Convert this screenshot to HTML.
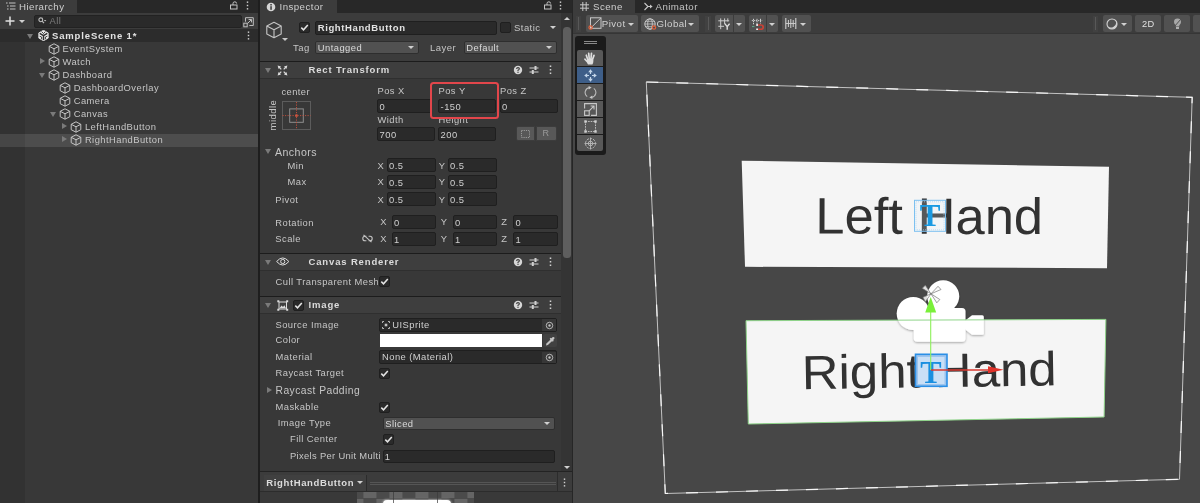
<!DOCTYPE html>
<html><head><meta charset="utf-8">
<style>
*{box-sizing:border-box;margin:0;padding:0}
html,body{width:1200px;height:503px;overflow:hidden;background:#383838}
body{font-family:"Liberation Sans",sans-serif;font-size:9.4px;letter-spacing:.45px;color:#c6c6c6;position:relative;-webkit-font-smoothing:antialiased}
.a{position:absolute}
.t{position:absolute;white-space:nowrap;line-height:12.8px;height:12.8px}
.b{font-weight:bold;font-size:9.5px;letter-spacing:.85px;color:#dcdcdc}
.f{position:absolute;background:#2a2a2a;border:1px solid #1f1f1f;border-radius:2px;height:14px}
.f span{color:#d0d0d0;position:absolute;left:1.6px;top:1px;line-height:12px;white-space:nowrap}
.dd{position:absolute;background:#515151;border:1px solid #2e2e2e;border-radius:2px;height:12.5px}
.dd span{position:absolute;left:1.8px;top:-0.5px;line-height:12px;white-space:nowrap;color:#dadada}
.dd i{position:absolute;right:4px;top:4px;width:0;height:0;border-left:3px solid transparent;border-right:3px solid transparent;border-top:3.5px solid #d0d0d0}
.cb{position:absolute;width:11px;height:11px;background:#2a2a2a;border:1px solid #1f1f1f;border-radius:2px}
.cb svg{position:absolute;left:0;top:0}
.tri-d{position:absolute;width:0;height:0;border-left:3.5px solid transparent;border-right:3.5px solid transparent;border-top:5px solid #7a7a7a}
.tri-r{position:absolute;width:0;height:0;border-top:3.5px solid transparent;border-bottom:3.5px solid transparent;border-left:5px solid #7a7a7a}
.hdr{position:absolute;left:260px;width:301px;background:#3e3e3e;border-top:1px solid #1c1c1c;border-bottom:1px solid #2f2f2f}
.btn{position:absolute;top:15.3px;height:16.4px;background:#515151;border-radius:2px}
</style></head><body><div id="root" style="position:absolute;left:0;top:0;width:1200px;height:503px;filter:blur(0.35px)">

<!-- ================= HIERARCHY ================= -->
<div id="hier" class="a" style="left:0;top:0;width:258px;height:503px;background:#383838"></div>
<div class="a" style="left:258px;top:0;width:2px;height:503px;background:#1e1e1e"></div>
<svg width="0" height="0" style="position:absolute"><defs><symbol id="cube" viewBox="0 0 12 12"><path d="M6 0.8 L10.8 3.3 V8.7 L6 11.2 L1.2 8.7 V3.3 Z M1.2 3.3 L6 5.8 L10.8 3.3 M6 5.8 V11.2" fill="none" stroke="#c4c4c4" stroke-width="1" stroke-linejoin="round"/></symbol><symbol id="chk" viewBox="0 0 11 11"><path d="M2.3 5.6 L4.5 7.8 L8.8 2.9" fill="none" stroke="#e4e4e4" stroke-width="1.5"/></symbol><symbol id="help" viewBox="0 0 10 10"><circle cx="5" cy="5" r="4.2" fill="#d6d6d6"/><path d="M3.6 4 Q3.6 2.6 5 2.6 Q6.4 2.6 6.4 3.8 Q6.4 4.6 5 5.3 V6" fill="none" stroke="#3e3e3e" stroke-width="1.1"/><rect x="4.4" y="6.7" width="1.2" height="1.2" fill="#3e3e3e"/></symbol><symbol id="preset" viewBox="0 0 10 10"><path d="M0.5 3 H9.5 M0.5 7 H9.5" stroke="#d0d0d0" stroke-width="1"/><rect x="5.5" y="1" width="2" height="4" fill="#d0d0d0"/><rect x="2.8" y="5" width="2" height="4" fill="#d0d0d0"/></symbol><symbol id="kebab" viewBox="0 0 3 10"><rect x="0.7" y="0.5" width="1.6" height="1.6" fill="#d0d0d0"/><rect x="0.7" y="4.2" width="1.6" height="1.6" fill="#d0d0d0"/><rect x="0.7" y="7.9" width="1.6" height="1.6" fill="#d0d0d0"/></symbol><symbol id="picker" viewBox="0 0 10 10"><circle cx="5" cy="5" r="3.6" fill="none" stroke="#c4c4c4" stroke-width="1"/><circle cx="5" cy="5" r="1.3" fill="#c4c4c4"/></symbol></defs></svg>
<div class="a" style="left:0;top:0;width:258px;height:13px;background:#282828"></div>
<div class="a" style="left:0;top:0;width:77px;height:13px;background:#3c3c3c"></div>
<svg class="a" style="left:6px;top:2px" width="10" height="8" viewBox="0 0 10 8"><path d="M0 1 H1.6 M3 1 H9.5 M1 4 H2.6 M4 4 H9.5 M1 7 H2.6 M4 7 H9.5" stroke="#c4c4c4" stroke-width="1"/></svg>
<div class="t" style="left:19px;top:0.5px;color:#cfcfcf;font-size:9.7px">Hierarchy</div>
<svg class="a" style="left:230px;top:1px" width="8" height="9" viewBox="0 0 8 9"><rect x="0.5" y="4" width="6.5" height="4" fill="none" stroke="#c4c4c4" stroke-width="1"/><path d="M3 4 V2.5 Q3 0.8 4.8 0.8 Q6.6 0.8 6.6 2.5" fill="none" stroke="#c4c4c4" stroke-width="1"/></svg>
<svg class="a" style="left:246px;top:1px" width="3" height="9"><use href="#kebab"/></svg>
<div class="a" style="left:0;top:13px;width:258px;height:16px;background:#3c3c3c"></div>
<svg class="a" style="left:5px;top:16px" width="10" height="10" viewBox="0 0 10 10"><path d="M5 0.5 V9.5 M0.5 5 H9.5" stroke="#e0e0e0" stroke-width="1.5"/></svg>
<div class="a" style="left:18.5px;top:19.5px;width:0;height:0;border-left:3px solid transparent;border-right:3px solid transparent;border-top:3.5px solid #d0d0d0"></div>
<div class="a" style="left:34px;top:14.5px;width:208px;height:13.5px;background:#2a2a2a;border:1px solid #222;border-radius:2px"></div>
<svg class="a" style="left:38px;top:17px" width="9" height="8" viewBox="0 0 9 8"><circle cx="2.8" cy="2.8" r="1.9" fill="none" stroke="#bdbdbd" stroke-width="1.1"/><path d="M4.2 4.2 L6 6.2" stroke="#bdbdbd" stroke-width="1.2"/><path d="M5.8 3 H8.4 L7.1 4.6 Z" fill="#bdbdbd"/></svg>
<div class="t" style="left:49.5px;top:15.3px;color:#7c7c7c">All</div>
<svg class="a" style="left:243px;top:16.5px" width="11" height="11" viewBox="0 0 11 11"><path d="M2.5 0.7 H10.3 V8.5 H6.3 M2.5 0.7 V4.7" fill="none" stroke="#bdbdbd" stroke-width="1"/><rect x="0.8" y="6.2" width="3.4" height="3.6" fill="none" stroke="#bdbdbd" stroke-width="1"/><path d="M4.5 6.5 L8.3 2.7 M5.6 2.5 H8.5 V5.4" fill="none" stroke="#bdbdbd" stroke-width="1"/></svg>
<div class="a" style="left:0;top:29px;width:258px;height:13px;background:#2c2c2c"></div>

<div class="tri-d" style="left:27px;top:33.5px"></div>
<svg class="a" style="left:37.8px;top:30px" width="11" height="11" viewBox="0 0 11 11"><path d="M5.5 0.2 L10.2 2.9 V8.1 L5.5 10.8 L0.8 8.1 V2.9 Z" fill="#ececec" stroke="#ececec" stroke-width="0.8" stroke-linejoin="round"/><path d="M5.5 5.6 V10 M5.5 5.6 L1.7 3.4 M5.5 5.6 L9.3 3.4" stroke="#2d2d2d" stroke-width="1.5"/><path d="M3.6 1.6 L5.5 3.6 L7.4 1.6 M1.6 6.2 L3.6 7 V9.2 M9.4 6.2 L7.4 7 V9.2" fill="none" stroke="#2d2d2d" stroke-width="0.9"/></svg>
<div class="t b" style="left:52px;top:29.5px;color:#e2e2e2">SampleScene 1*</div>
<svg class="a" style="left:247px;top:31px" width="3" height="9"><use href="#kebab"/></svg>
<svg class="a" style="left:47.6px;top:43.2px" width="12" height="12"><use href="#cube"/></svg>
<div class="t" style="left:62.5px;top:42.5px;font-size:9.4px">EventSystem</div>
<div class="tri-r" style="left:40.0px;top:58.2px"></div>
<svg class="a" style="left:47.6px;top:56.2px" width="12" height="12"><use href="#cube"/></svg>
<div class="t" style="left:62.5px;top:55.5px;font-size:9.4px">Watch</div>
<div class="tri-d" style="left:38.5px;top:72.5px"></div>
<svg class="a" style="left:47.6px;top:69.2px" width="12" height="12"><use href="#cube"/></svg>
<div class="t" style="left:62.5px;top:68.5px;font-size:9.4px">Dashboard</div>
<svg class="a" style="left:58.8px;top:82.2px" width="12" height="12"><use href="#cube"/></svg>
<div class="t" style="left:73.7px;top:81.5px;font-size:9.4px">DashboardOverlay</div>
<svg class="a" style="left:58.8px;top:95.2px" width="12" height="12"><use href="#cube"/></svg>
<div class="t" style="left:73.7px;top:94.5px;font-size:9.4px">Camera</div>
<div class="tri-d" style="left:49.7px;top:111.5px"></div>
<svg class="a" style="left:58.8px;top:108.2px" width="12" height="12"><use href="#cube"/></svg>
<div class="t" style="left:73.7px;top:107.5px;font-size:9.4px">Canvas</div>
<div class="tri-r" style="left:62.4px;top:123.2px"></div>
<svg class="a" style="left:70.0px;top:121.2px" width="12" height="12"><use href="#cube"/></svg>
<div class="t" style="left:84.9px;top:120.5px;font-size:9.4px">LeftHandButton</div>
<div class="a" style="left:0;top:133.5px;width:258px;height:13.2px;background:#4d4d4d"></div>
<div class="a" style="left:0;top:42px;width:25px;height:461px;background:rgba(0,0,0,0.09)"></div>
<div class="tri-r" style="left:62.4px;top:136.2px"></div>
<svg class="a" style="left:70.0px;top:134.2px" width="12" height="12"><use href="#cube"/></svg>
<div class="t" style="left:84.9px;top:133.5px;font-size:9.4px">RightHandButton</div>
<div id="insp" class="a" style="left:260px;top:0;width:312px;height:503px;background:#383838"></div>
<div class="a" style="left:260px;top:0;width:312px;height:13px;background:#282828"></div>
<div class="a" style="left:260px;top:0;width:77px;height:13px;background:#3c3c3c"></div>
<svg class="a" style="left:266px;top:1.5px" width="10" height="10" viewBox="0 0 10 10"><circle cx="5" cy="5" r="4.3" fill="#d6d6d6"/><rect x="4.3" y="4.2" width="1.5" height="3.6" fill="#3c3c3c"/><rect x="4.3" y="2" width="1.5" height="1.5" fill="#3c3c3c"/></svg>
<div class="t" style="left:279.5px;top:0.5px;color:#cfcfcf;font-size:9.7px">Inspector</div>
<svg class="a" style="left:544px;top:1px" width="8" height="9" viewBox="0 0 8 9"><rect x="0.5" y="4" width="6.5" height="4" fill="none" stroke="#c4c4c4" stroke-width="1"/><path d="M3 4 V2.5 Q3 0.8 4.8 0.8 Q6.6 0.8 6.6 2.5" fill="none" stroke="#c4c4c4" stroke-width="1"/></svg>
<svg class="a" style="left:559px;top:1px" width="3" height="9"><use href="#kebab"/></svg>
<div class="a" style="left:260px;top:13px;width:301px;height:48px;background:#3c3c3c"></div>
<svg class="a" style="left:265px;top:21px" width="18" height="18" viewBox="0 0 12 12"><path d="M6 0.8 L10.8 3.3 V8.7 L6 11.2 L1.2 8.7 V3.3 Z M1.2 3.3 L6 5.8 L10.8 3.3 M6 5.8 V11.2" fill="none" stroke="#c4c4c4" stroke-width="0.75" stroke-linejoin="round"/></svg>
<div class="a" style="left:282px;top:38px;width:0;height:0;border-left:3px solid transparent;border-right:3px solid transparent;border-top:3.5px solid #c8c8c8"></div>
<div class="cb" style="left:298.8px;top:22px"><svg width="11" height="11" style="left:-1px;top:-1px"><use href="#chk"/></svg></div>
<div class="f" style="left:315px;top:20.5px;width:181.5px;height:14.5px"><span class="b" style="left:1.7px;top:0.8px;color:#e2e2e2;letter-spacing:.62px">RightHandButton</span></div>
<div class="cb" style="left:499.7px;top:22px"></div>
<div class="t" style="left:514px;top:22.2px;font-size:9.5px">Static</div>
<div class="a" style="left:549.5px;top:26px;width:0;height:0;border-left:3px solid transparent;border-right:3px solid transparent;border-top:3.5px solid #d0d0d0"></div>
<div class="t" style="left:293px;top:42.2px;font-size:9.5px">Tag</div>
<div class="dd" style="left:315px;top:41px;width:103.5px"><span>Untagged</span><i></i></div>
<div class="t" style="left:430px;top:42.2px;font-size:9.5px">Layer</div>
<div class="dd" style="left:463.5px;top:41px;width:93.5px"><span>Default</span><i></i></div>
<div class="hdr" style="top:61px;height:17.7px"></div>
<div class="tri-d" style="left:265px;top:67.5px"></div>
<div class="t b" style="left:308.5px;top:64px">Rect Transform</div>
<svg class="a" style="left:513px;top:65px" width="10" height="10"><use href="#help"/></svg>
<svg class="a" style="left:529px;top:65px" width="10" height="10"><use href="#preset"/></svg>
<svg class="a" style="left:548.8px;top:65.3px" width="3" height="9.5"><use href="#kebab"/></svg>
<svg class="a" style="left:277px;top:64.5px" width="11" height="11" viewBox="0 0 11 11"><path d="M0.6 0.6 L4 1.6 L1.6 4 Z M10.4 0.6 L7 1.6 L9.4 4 Z M0.6 10.4 L4 9.4 L1.6 7 Z M10.4 10.4 L7 9.4 L9.4 7 Z" fill="#dcdcdc"/><path d="M2 2 L4.3 4.3 M9 2 L6.7 4.3 M2 9 L4.3 6.7 M9 9 L6.7 6.7" stroke="#dcdcdc" stroke-width="1.2"/></svg>
<div class="t" style="left:281.5px;top:86px;font-size:9.3px">center</div>
<div class="t" style="left:257.7px;top:109px;width:30px;text-align:center;font-size:9.5px;transform:rotate(-90deg)">middle</div>
<svg class="a" style="left:281.5px;top:100.8px" width="29" height="29" viewBox="0 0 29 29"><rect x="0.5" y="0.5" width="28" height="28" fill="none" stroke="#5c5c5c" stroke-width="1"/><rect x="7.7" y="7.9" width="13.6" height="13.4" fill="none" stroke="#8e8e8e" stroke-width="1"/><path d="M0.5 14.6 H28.5 M14.5 1 V28" stroke="#c8503c" stroke-width="0.9" stroke-dasharray="1.2 1.3"/><rect x="13.3" y="13.4" width="2.4" height="2.4" fill="#d0553f"/></svg>
<div class="t" style="left:377.5px;top:84.5px">Pos X</div>
<div class="f" style="left:377px;top:98.5px;width:58px"><span>0</span></div>
<div class="t" style="left:438.5px;top:84.5px">Pos Y</div>
<div class="f" style="left:438px;top:98.5px;width:58px"><span>-150</span></div>
<div class="t" style="left:500.0px;top:84.5px">Pos Z</div>
<div class="f" style="left:499.5px;top:98.5px;width:58px"><span>0</span></div>
<div class="t" style="left:377.5px;top:113.5px">Width</div>
<div class="f" style="left:377px;top:127.3px;width:58px"><span>700</span></div>
<div class="t" style="left:438.5px;top:113.5px">Height</div>
<div class="f" style="left:438px;top:127.3px;width:58px"><span>200</span></div>
<div class="a" style="left:430.3px;top:82px;width:68.3px;height:37.3px;border:2px solid #e2464b;border-radius:3.5px;background:#383838"></div>
<div class="t" style="left:438.5px;top:84.5px">Pos Y</div>
<div class="f" style="left:438px;top:98.5px;width:58px"><span>-150</span></div>
<div class="a" style="left:515.5px;top:126.3px;width:19.5px;height:14.4px;background:#585858;border:1px solid #3c3c3c;border-radius:2px 0 0 2px"></div>
<svg class="a" style="left:521px;top:129.5px" width="9" height="8" viewBox="0 0 9 8"><rect x="0.5" y="0.5" width="8" height="7" fill="none" stroke="#9a9a9a" stroke-width="1" stroke-dasharray="1.2 1"/></svg>
<div class="a" style="left:535.5px;top:126.3px;width:21.5px;height:14.4px;background:#585858;border:1px solid #3c3c3c;border-radius:0 2px 2px 0"></div>
<div class="t" style="left:542.5px;top:127.3px;color:#9a9a9a;font-size:9px">R</div>
<div class="tri-d" style="left:265px;top:148.5px"></div>
<div class="t" style="left:275px;top:146.0px;font-size:10.6px">Anchors</div>
<div class="t" style="left:287.5px;top:160px">Min</div>
<div class="t" style="left:377.5px;top:159.5px">X</div>
<div class="f" style="left:386.5px;top:158.3px;width:49px"><span>0.5</span></div>
<div class="t" style="left:438.7px;top:159.5px">Y</div>
<div class="f" style="left:447.5px;top:158.3px;width:49px"><span>0.5</span></div>
<div class="t" style="left:287.5px;top:176.3px">Max</div>
<div class="t" style="left:377.5px;top:175.8px">X</div>
<div class="f" style="left:386.5px;top:174.60000000000002px;width:49px"><span>0.5</span></div>
<div class="t" style="left:438.7px;top:175.8px">Y</div>
<div class="f" style="left:447.5px;top:174.60000000000002px;width:49px"><span>0.5</span></div>
<div class="t" style="left:275.3px;top:194px">Pivot</div>
<div class="t" style="left:377.5px;top:193.5px">X</div>
<div class="f" style="left:386.5px;top:192.3px;width:49px"><span>0.5</span></div>
<div class="t" style="left:438.7px;top:193.5px">Y</div>
<div class="f" style="left:447.5px;top:192.3px;width:49px"><span>0.5</span></div>
<div class="t" style="left:275.3px;top:216.8px">Rotation</div>
<div class="t" style="left:380.3px;top:216.3px">X</div>
<div class="f" style="left:391.5px;top:215.10000000000002px;width:44.5px"><span>0</span></div>
<div class="t" style="left:440.8px;top:216.3px">Y</div>
<div class="f" style="left:452.5px;top:215.10000000000002px;width:44.5px"><span>0</span></div>
<div class="t" style="left:501.3px;top:216.3px">Z</div>
<div class="f" style="left:513px;top:215.10000000000002px;width:44.5px"><span>0</span></div>
<div class="t" style="left:275.3px;top:233.2px">Scale</div>
<div class="t" style="left:380.3px;top:232.7px">X</div>
<div class="f" style="left:391.5px;top:231.5px;width:44.5px"><span>1</span></div>
<div class="t" style="left:440.8px;top:232.7px">Y</div>
<div class="f" style="left:452.5px;top:231.5px;width:44.5px"><span>1</span></div>
<div class="t" style="left:501.3px;top:232.7px">Z</div>
<div class="f" style="left:513px;top:231.5px;width:44.5px"><span>1</span></div>
<svg class="a" style="left:361.5px;top:234px" width="11" height="9" viewBox="0 0 11 9"><path d="M4.4 2.2 H3 Q0.8 2.2 0.8 4.5 Q0.8 6.8 3 6.8 H4.4 M6.6 2.2 H8 Q10.2 2.2 10.2 4.5 Q10.2 6.8 8 6.8 H6.6" fill="none" stroke="#c4c4c4" stroke-width="1.1"/><path d="M1.5 0.8 L9.5 8.2" stroke="#c4c4c4" stroke-width="1.1"/></svg>
<div class="hdr" style="top:253px;height:17.7px"></div>
<div class="tri-d" style="left:265px;top:259.5px"></div>
<div class="t b" style="left:308.5px;top:256px">Canvas Renderer</div>
<svg class="a" style="left:513px;top:257px" width="10" height="10"><use href="#help"/></svg>
<svg class="a" style="left:529px;top:257px" width="10" height="10"><use href="#preset"/></svg>
<svg class="a" style="left:548.8px;top:257.3px" width="3" height="9.5"><use href="#kebab"/></svg>
<svg class="a" style="left:276px;top:257px" width="13.5" height="9" viewBox="0 0 13.5 9"><path d="M0.6 4.5 Q6.75 -2.6 12.9 4.5 Q6.75 11.6 0.6 4.5 Z" fill="none" stroke="#dcdcdc" stroke-width="1"/><circle cx="6.75" cy="4.5" r="2.1" fill="none" stroke="#dcdcdc" stroke-width="1"/></svg>
<div class="t" style="left:275.5px;top:275.5px;width:102px;overflow:hidden">Cull Transparent Mesh</div>
<div class="cb" style="left:379px;top:275.8px"><svg width="11" height="11" style="left:-1px;top:-1px"><use href="#chk"/></svg></div>
<div class="hdr" style="top:296px;height:17.7px"></div>
<div class="tri-d" style="left:265px;top:302.5px"></div>
<div class="t b" style="left:308.5px;top:299px">Image</div>
<svg class="a" style="left:513px;top:300px" width="10" height="10"><use href="#help"/></svg>
<svg class="a" style="left:529px;top:300px" width="10" height="10"><use href="#preset"/></svg>
<svg class="a" style="left:548.8px;top:300.3px" width="3" height="9.5"><use href="#kebab"/></svg>
<svg class="a" style="left:277px;top:299.5px" width="11.5" height="11" viewBox="0 0 11.5 11"><rect x="2" y="2" width="7.5" height="7" fill="none" stroke="#dcdcdc" stroke-width="1"/><path d="M0.3 0.3 H2.3 V2.3 H0.3 Z M9.2 0.3 H11.2 V2.3 H9.2 Z M0.3 8.7 H2.3 V10.7 H0.3 Z M9.2 8.7 H11.2 V10.7 H9.2 Z" fill="#dcdcdc"/><path d="M2.5 8.2 L4.6 5.6 L6 7 L7.4 5.2 L9 8.2 Z" fill="#dcdcdc"/></svg>
<div class="cb" style="left:292.5px;top:299.7px"><svg width="11" height="11" style="left:-1px;top:-1px"><use href="#chk"/></svg></div>
<div class="t" style="left:275.5px;top:318.5px;font-size:9.4px">Source Image</div>
<div class="f" style="left:379px;top:317.7px;width:178px;height:14.3px"><span style="left:12.3px;top:0.6px">UISprite</span></div>
<svg class="a" style="left:381.5px;top:321px" width="8" height="8" viewBox="0 0 8 8"><path d="M0.5 2 V0.5 H2 M6 0.5 H7.5 V2 M7.5 6 V7.5 H6 M2 7.5 H0.5 V6" fill="none" stroke="#c4c4c4" stroke-width="0.9"/><rect x="2.7" y="2.7" width="2.6" height="2.6" fill="#c4c4c4"/></svg>
<div class="a" style="left:541.5px;top:319.3px;width:14.5px;height:11.5px;background:#373737"></div>
<svg class="a" style="left:544.5px;top:320.5px" width="9" height="9"><use href="#picker"/></svg>
<div class="t" style="left:275.5px;top:334.0px;font-size:9.4px">Color</div>
<div class="a" style="left:379.8px;top:334.2px;width:162.5px;height:13px;background:#fff"></div>
<div class="a" style="left:543.3px;top:334.2px;width:14px;height:13px;background:#414141;border-radius:2px"></div>
<svg class="a" style="left:545px;top:335.5px" width="10.5" height="10.5" viewBox="0 0 10.5 10.5"><path d="M1 9.5 L1.4 7.6 L5.6 3.4 L7.1 4.9 L2.9 9.1 Z" fill="#c4c4c4"/><path d="M5.2 2.2 L8.3 5.3" stroke="#c4c4c4" stroke-width="1.5"/><path d="M6.6 3.9 L8.3 2.2" stroke="#c4c4c4" stroke-width="2.4" stroke-linecap="round"/></svg>
<div class="t" style="left:275.5px;top:350.5px;font-size:9.4px">Material</div>
<div class="f" style="left:379px;top:350.3px;width:178px;height:13.6px"><span style="left:2px;top:-0.2px">None (Material)</span></div>
<div class="a" style="left:541.5px;top:351.7px;width:14.5px;height:11px;background:#373737"></div>
<svg class="a" style="left:544.5px;top:352.7px" width="9" height="9"><use href="#picker"/></svg>
<div class="t" style="left:275.5px;top:366.8px;font-size:9.4px">Raycast Target</div>
<div class="cb" style="left:379px;top:367.6px"><svg width="11" height="11" style="left:-1px;top:-1px"><use href="#chk"/></svg></div>
<div class="tri-r" style="left:266.5px;top:386.5px"></div>
<div class="t" style="left:275.5px;top:384.7px;font-size:10.3px">Raycast Padding</div>
<div class="t" style="left:275.5px;top:401.0px;font-size:9.4px">Maskable</div>
<div class="cb" style="left:379px;top:401.7px"><svg width="11" height="11" style="left:-1px;top:-1px"><use href="#chk"/></svg></div>
<div class="t" style="left:277.8px;top:416.8px;font-size:9.4px">Image Type</div>
<div class="dd" style="left:382.5px;top:417px;width:172px;height:13px"><span style="top:-0.3px">Sliced</span><i></i></div>
<div class="t" style="left:290px;top:432.5px;font-size:9.4px">Fill Center</div>
<div class="cb" style="left:382.5px;top:434px"><svg width="11" height="11" style="left:-1px;top:-1px"><use href="#chk"/></svg></div>
<div class="t" style="left:290px;top:449.5px;width:90.5px;overflow:hidden;letter-spacing:.33px">Pixels Per Unit Multiplier</div>
<div class="f" style="left:382.5px;top:449.7px;width:172.5px;height:13.3px"><span style="left:1.2px;top:0.6px">1</span></div>
<div class="a" style="left:561px;top:13px;width:11px;height:458px;background:#343434"></div>
<div class="a" style="left:563.5px;top:17px;width:0;height:0;border-left:3px solid transparent;border-right:3px solid transparent;border-bottom:3.5px solid #d0d0d0"></div>
<div class="a" style="left:563px;top:26.5px;width:7.5px;height:231.5px;background:#5e5e5e;border-radius:3.5px"></div>
<div class="a" style="left:563.5px;top:465.5px;width:0;height:0;border-left:3px solid transparent;border-right:3px solid transparent;border-top:3.5px solid #d0d0d0"></div>
<div class="a" style="left:260px;top:470.5px;width:312px;height:21px;background:#3c3c3c;border-top:1px solid #232323;border-bottom:1px solid #2c2c2c"></div>
<div class="a" style="left:263.5px;top:474.5px;width:103px;height:16.5px;background:#404040;border-right:1px solid #2c2c2c"></div>
<div class="t b" style="left:266.3px;top:476.5px;letter-spacing:.62px">RightHandButton</div>
<div class="a" style="left:356.7px;top:481.3px;width:0;height:0;border-left:3px solid transparent;border-right:3px solid transparent;border-top:3.5px solid #d0d0d0"></div>
<div class="a" style="left:370px;top:481.5px;width:186px;height:1px;background:#555"></div>
<div class="a" style="left:370px;top:484px;width:186px;height:1px;background:#555"></div>
<div class="a" style="left:557.3px;top:471.5px;width:1px;height:19px;background:#2c2c2c"></div>
<svg class="a" style="left:563.3px;top:478px" width="3" height="9"><use href="#kebab"/></svg>
<div class="a" style="left:260px;top:492px;width:312px;height:11px;background:#393939"></div>
<div class="a" style="left:356.9px;top:492px;width:117.3px;height:11px;background:repeating-conic-gradient(#656565 0 25%,#4b4b4b 0 50%) -6.6px 0/26px 13px"></div>
<div class="a" style="left:383px;top:500.3px;width:68px;height:8px;background:#fff;border-radius:5px;box-shadow:0 0 2px 1px rgba(255,255,255,.35)"></div>
<div class="a" style="left:393px;top:492px;width:1px;height:11px;background:#3a3a3a;opacity:.7"></div>
<div class="a" style="left:437px;top:492px;width:1px;height:11px;background:#3a3a3a;opacity:.7"></div>
<div class="a" style="left:572px;top:0;width:1px;height:503px;background:#262626"></div>
<div id="scene" class="a" style="left:573px;top:0;width:627px;height:503px;background:#474747"></div>
<div class="a" style="left:573px;top:0;width:627px;height:13px;background:#282828"></div>
<div class="a" style="left:573px;top:0;width:62px;height:13px;background:#3c3c3c"></div>
<svg class="a" style="left:580px;top:1.5px" width="9" height="9" viewBox="0 0 9 9"><path d="M2.8 0 V9 M6.2 0 V9 M0 2.8 H9 M0 6.2 H9" stroke="#c8c8c8" stroke-width="1"/></svg>
<div class="t" style="left:593px;top:0.5px;color:#cfcfcf;font-size:9.7px">Scene</div>
<svg class="a" style="left:643.5px;top:1.5px" width="9" height="9" viewBox="0 0 9 9"><path d="M0.5 1 L4 4.5 L0.5 8 M4 4.5 H8" fill="none" stroke="#c8c8c8" stroke-width="1.1"/><path d="M6 2.6 L8.6 4.5 L6 6.4 Z" fill="#c8c8c8"/></svg>
<div class="t" style="left:655.5px;top:0.5px;color:#c4c4c4;font-size:9.7px">Animator</div>
<div class="a" style="left:573px;top:13px;width:627px;height:20.7px;background:#3c3c3c;border-bottom:1px solid #363636"></div>
<div class="a" style="left:575.8px;top:15.5px;width:5.4px;height:16px;background:#414141"></div><div class="a" style="left:578.0px;top:17px;width:1px;height:13px;background:#585858"></div>

<div class="btn" style="left:586px;width:52px"></div>
<svg class="a" style="left:588px;top:17px" width="14" height="13" viewBox="0 0 14 13"><rect x="2.5" y="0.8" width="10.5" height="10.5" fill="none" stroke="#c8c8c8" stroke-width="1"/><path d="M2.8 11 L12.8 1" stroke="#c8c8c8" stroke-width="1"/><circle cx="2.6" cy="10.6" r="1.7" fill="none" stroke="#e8623a" stroke-width="1.1"/></svg>
<div class="t" style="left:601.8px;top:17.7px;font-size:9.7px;color:#d0d0d0">Pivot</div>
<div class="a" style="left:627.5px;top:22.5px;width:0;height:0;border-left:3.2px solid transparent;border-right:3.2px solid transparent;border-top:3.7px solid #d0d0d0"></div>
<div class="btn" style="left:641.3px;width:57.4px"></div>
<svg class="a" style="left:644px;top:17.5px" width="13" height="12" viewBox="0 0 13 12"><circle cx="6" cy="6" r="5.2" fill="none" stroke="#c8c8c8" stroke-width="1"/><ellipse cx="6" cy="6" rx="2.3" ry="5.2" fill="none" stroke="#c8c8c8" stroke-width="0.9"/><path d="M0.8 6 H11.2 M1.6 3.3 H10.4 M1.6 8.7 H10.4" stroke="#c8c8c8" stroke-width="0.8"/><circle cx="10" cy="9.6" r="1.7" fill="#515151" stroke="#e8623a" stroke-width="1.1"/></svg>
<div class="t" style="left:656.5px;top:17.7px;font-size:9.7px;color:#d0d0d0">Global</div>
<div class="a" style="left:688px;top:22.5px;width:0;height:0;border-left:3.2px solid transparent;border-right:3.2px solid transparent;border-top:3.7px solid #d0d0d0"></div>
<div class="a" style="left:705.3px;top:15.5px;width:5.4px;height:16px;background:#414141"></div><div class="a" style="left:707.5px;top:17px;width:1px;height:13px;background:#585858"></div>

<div class="btn" style="left:715px;width:18px;border-radius:2px 0 0 2px"></div>
<svg class="a" style="left:718px;top:17.5px" width="12" height="12" viewBox="0 0 12 12"><path d="M2.7 0.4 V11.2 M6.6 0.4 V6 M0.3 2.8 H11.2 M0.3 8.3 H6 M9.8 0.4 V3.5" stroke="#cdcdcd" stroke-width="1"/><path d="M6.8 5.6 L9.2 8.6 L11.6 5.6 M9.2 8.6 V11.7" fill="none" stroke="#e0e0e0" stroke-width="1.4"/></svg>
<div class="btn" style="left:733.8px;width:11.5px;border-radius:0 2px 2px 0"></div>
<div class="a" style="left:736.4px;top:22.5px;width:0;height:0;border-left:3.2px solid transparent;border-right:3.2px solid transparent;border-top:3.7px solid #d0d0d0"></div>
<div class="btn" style="left:748.7px;width:17.2px;border-radius:2px 0 0 2px"></div>
<svg class="a" style="left:751px;top:17.5px" width="13" height="12" viewBox="0 0 13 12"><path d="M2.5 0.8 V7 M6 0.8 V6 M9.5 0.8 V5.5" stroke="#cdcdcd" stroke-width="1" stroke-dasharray="1.3 0.7"/><path d="M0.8 2.6 H11.2" stroke="#cdcdcd" stroke-width="1" stroke-dasharray="1.3 0.7"/><path d="M1 8.6 H3.4" stroke="#5fae8a" stroke-width="1"/><path d="M7 7 H9.6 Q12.2 7 12.2 9.2 Q12.2 11.4 9.6 11.4 H7" fill="none" stroke="#c94236" stroke-width="1.7"/><rect x="5.2" y="6.1" width="1.8" height="1.8" fill="#f0f0f0"/><rect x="5.2" y="10.5" width="1.8" height="1.8" fill="#f0f0f0"/></svg>
<div class="btn" style="left:766.8px;width:11.5px;border-radius:0 2px 2px 0"></div>
<div class="a" style="left:769.4px;top:22.5px;width:0;height:0;border-left:3.2px solid transparent;border-right:3.2px solid transparent;border-top:3.7px solid #d0d0d0"></div>
<div class="btn" style="left:782px;width:28.5px"></div>
<svg class="a" style="left:784.5px;top:18px" width="12" height="11" viewBox="0 0 12 11"><path d="M0.8 0 V11 M10.8 0 V11" stroke="#d0d0d0" stroke-width="1.1"/><path d="M3.4 2 V9 M5.8 1 V10 M8.2 2 V9" stroke="#d0d0d0" stroke-width="1"/><path d="M0.8 5.5 H10.8" stroke="#d0d0d0" stroke-width="0.9"/></svg>
<div class="a" style="left:799.5px;top:22.5px;width:0;height:0;border-left:3.2px solid transparent;border-right:3.2px solid transparent;border-top:3.7px solid #d0d0d0"></div>
<div class="a" style="left:1092.8px;top:15.5px;width:5.4px;height:16px;background:#414141"></div><div class="a" style="left:1095.0px;top:17px;width:1px;height:13px;background:#585858"></div>

<div class="btn" style="left:1102.8px;width:29.2px"></div>
<svg class="a" style="left:1105.5px;top:17.5px" width="12" height="12" viewBox="0 0 12 12"><circle cx="6" cy="6" r="5" fill="none" stroke="#d4d4d4" stroke-width="1.1"/><path d="M10.2 3.2 A5 5 0 1 1 1.6 8.3 A5.4 5.4 0 0 0 10.2 3.2 Z" fill="#d4d4d4"/></svg>
<div class="a" style="left:1120.5px;top:22.5px;width:0;height:0;border-left:3.2px solid transparent;border-right:3.2px solid transparent;border-top:3.7px solid #d0d0d0"></div>
<div class="btn" style="left:1134.8px;width:26.2px"></div>
<div class="t" style="left:1142px;top:17.7px;font-size:9.3px;color:#e0e0e0">2D</div>
<div class="btn" style="left:1164px;width:26px"></div>
<svg class="a" style="left:1172.5px;top:17.5px" width="9" height="12" viewBox="0 0 9 12"><path d="M4.5 0.6 Q8 0.6 8 4 Q8 5.8 6.3 7.2 V8.4 H2.7 V7.2 Q1 5.8 1 4 Q1 0.6 4.5 0.6 Z" fill="#a8a8a8"/><rect x="3" y="9.2" width="3" height="1.6" fill="#c8c8c8"/><path d="M1 9 L8 1" stroke="#515151" stroke-width="1"/></svg>
<div class="btn" style="left:1192.8px;width:10px"></div>
<div class="a" style="left:575.2px;top:35.5px;width:30.4px;height:119.3px;background:#1b1b1b;border-radius:3px"></div>
<div class="a" style="left:584px;top:40.8px;width:13px;height:1px;background:#8a8a8a"></div>
<div class="a" style="left:584px;top:43.3px;width:13px;height:1px;background:#8a8a8a"></div>
<div class="a" style="left:577px;top:50px;width:26px;height:16.3px;background:#585858;border-radius:2px 2px 0 0"></div>
<div class="a" style="left:577px;top:67px;width:26px;height:16.3px;background:#3e5e88;border-radius:0"></div>
<div class="a" style="left:577px;top:84px;width:26px;height:16.3px;background:#585858;border-radius:0"></div>
<div class="a" style="left:577px;top:101px;width:26px;height:16.3px;background:#585858;border-radius:0"></div>
<div class="a" style="left:577px;top:118px;width:26px;height:16.3px;background:#585858;border-radius:0"></div>
<div class="a" style="left:577px;top:135px;width:26px;height:16.3px;background:#585858;border-radius:0 0 2px 2px"></div>
<svg class="a" style="left:584.2px;top:51.6px" width="12" height="13" viewBox="0 0 12 13"><g stroke="#dedede" stroke-width="1.7" stroke-linecap="round" fill="none"><path d="M3.9 8 L2.3 3.2"/><path d="M5.3 7.5 L4.7 1.3"/><path d="M6.9 7.5 L7.5 1.3"/><path d="M8.3 8 L10 3.4"/><path d="M3.5 10 L1 7.2"/></g><path d="M2.8 8.6 Q3 6.6 6.1 6.6 Q9.4 6.6 9.4 8.8 Q9.4 11.2 8.4 12.6 H4 Q2.8 10.8 2.8 8.6 Z" fill="#dedede"/></svg>
<svg class="a" style="left:583.5px;top:68.7px" width="13" height="13" viewBox="0 0 13 13"><path d="M6.5 0.2 L8.8 3.2 H7.1 V5 H5.9 V3.2 H4.2 Z M6.5 12.8 L8.8 9.8 H7.1 V8 H5.9 V9.8 H4.2 Z M0.2 6.5 L3.2 4.2 V5.9 H5 V7.1 H3.2 V8.8 Z M12.8 6.5 L9.8 4.2 V5.9 H8 V7.1 H9.8 V8.8 Z" fill="#c4d6ea"/></svg>
<svg class="a" style="left:583.5px;top:85.7px" width="13" height="13" viewBox="0 0 13 13"><path d="M3.2 10.6 A5 5 0 0 1 5.5 1.6" fill="none" stroke="#bababa" stroke-width="1.1"/><path d="M9.8 2.4 A5 5 0 0 1 7.5 11.4" fill="none" stroke="#bababa" stroke-width="1.1"/><path d="M4.6 0 L7.6 1.6 L4.8 3.6 Z" fill="#c8c8c8"/><path d="M8.4 13 L5.4 11.4 L8.2 9.4 Z" fill="#c8c8c8"/></svg>
<svg class="a" style="left:583.5px;top:102.7px" width="13" height="13" viewBox="0 0 13 13"><path d="M0.6 5.5 V0.6 H12.4 V12.4 H7" fill="none" stroke="#c8c8c8" stroke-width="1.1"/><rect x="0.6" y="7.8" width="4.6" height="4.6" fill="none" stroke="#c8c8c8" stroke-width="1.1"/><path d="M5.2 7.8 L9.8 3.2 M6.6 3 H10 V6.4" fill="none" stroke="#c8c8c8" stroke-width="1.1"/></svg>
<svg class="a" style="left:583.5px;top:119.7px" width="13" height="13" viewBox="0 0 13 13"><rect x="1.5" y="1.5" width="10" height="10" fill="none" stroke="#bdbdbd" stroke-width="1" stroke-dasharray="1.6 1"/><rect x="0.3" y="0.3" width="2.4" height="2.4" fill="#d0d0d0"/><rect x="10.3" y="0.3" width="2.4" height="2.4" fill="#d0d0d0"/><rect x="0.3" y="10.3" width="2.4" height="2.4" fill="#d0d0d0"/><rect x="10.3" y="10.3" width="2.4" height="2.4" fill="#d0d0d0"/></svg>
<svg class="a" style="left:583.5px;top:136.7px" width="13" height="13" viewBox="0 0 13 13"><circle cx="6.5" cy="6.5" r="5" fill="none" stroke="#b8b8b8" stroke-width="1" stroke-dasharray="2.2 1"/><circle cx="6.5" cy="6.5" r="2.3" fill="none" stroke="#b8b8b8" stroke-width="0.9"/><path d="M6.5 0.5 V12.5 M0.5 6.5 H12.5" stroke="#b8b8b8" stroke-width="0.9"/></svg>
<svg class="a" style="left:573px;top:34px;letter-spacing:0" width="627" height="469" viewBox="573 34 627 469">
<defs><filter id="sh" x="-20%" y="-20%" width="140%" height="140%"><feDropShadow dx="0" dy="1" stdDeviation="1.2" flood-color="#000" flood-opacity="0.35"/></filter></defs>
<polygon points="646.3,82 1192.2,97.3 1179.5,479.3 665.3,493.5" fill="none" stroke="#c2c2c2" stroke-width="1"/><polygon points="646.3,82 1192.2,97.3 1179.5,479.3 665.3,493.5" fill="none" stroke="#f6f6f6" stroke-width="1.2" stroke-dasharray="12 18"/>
<polygon points="741.7,160.7 1109,166.7 1107,268.2 745,266.8" fill="#f5f5f5"/>
<text transform="translate(815.3,233.5) rotate(0.18) scale(1.028,1)" font-family="Liberation Sans, sans-serif" font-size="51.1" fill="#323232">Left Hand</text>
<polygon points="746,320.7 1105.9,319.4 1104.1,417 748.3,424" fill="#f5f5f5"/>
<text transform="translate(802,389.3) rotate(-0.9) scale(1.062,1)" font-family="Liberation Sans, sans-serif" font-size="48" fill="#323232">Right Hand</text>
<rect x="914.5" y="200.3" width="31" height="31" fill="#e4f1fb" fill-opacity="0.2" stroke="#7cc0f0" stroke-width="1"/>
<rect x="916" y="201.8" width="28" height="28" fill="none" stroke="#a8d6f6" stroke-width="0.7" stroke-dasharray="1 1"/>
<text x="930" y="226" text-anchor="middle" font-family="Liberation Serif, serif" font-weight="bold" font-size="31" fill="#1a9ae2">T</text>
<g filter="url(#sh)" fill="#ffffff"><circle cx="943.2" cy="296.3" r="16"/><circle cx="913.2" cy="313.5" r="16.5"/><rect x="913.8" y="308" width="51.7" height="33.7" rx="3.5"/><path d="M964 321.5 L972 315.3 H982.3 Q983.8 315.3 983.8 316.8 V333.2 Q983.8 334.7 982.3 334.7 H972 L964 328.5 Z"/></g>
<polygon points="746,320.7 1105.9,319.4 1104.1,417 748.3,424" fill="none" stroke="#8fd48a" stroke-width="1"/>
<rect x="915.5" y="354.3" width="31.5" height="32" fill="#9cc4ee" stroke="#2b8fe6" stroke-width="1.6"/>
<rect x="918" y="357" width="26.5" height="27" fill="#d4e6f8" fill-opacity="0.8"/>
<text x="931" y="382.5" text-anchor="middle" font-family="Liberation Serif, serif" font-weight="bold" font-size="32" fill="#1a8fe0">T</text>
<g stroke="#777" stroke-width="0.7" fill="#fafafa" fill-opacity="0.85"><path d="M931 293.8 L922.3 288.3 L925.3 285.3 Z M931 293.8 L938 286.3 L941 289.5 Z M931 293.8 L939.8 299.5 L936.8 302.8 Z M931 293.8 L923 297.3 L925.3 301.8 Z"/></g>
<path d="M930.7 370 V309" stroke="#8cf05a" stroke-width="1.1"/>
<path d="M930.7 297 L936.2 312.6 H925.2 Z" fill="#7af03a"/>
<path d="M931 370 H990" stroke="#d83a30" stroke-width="1.3"/>
<path d="M1003.5 369.7 L988 373.3 V366.2 Z" fill="#e0322a"/>
</svg>

</div></body></html>
